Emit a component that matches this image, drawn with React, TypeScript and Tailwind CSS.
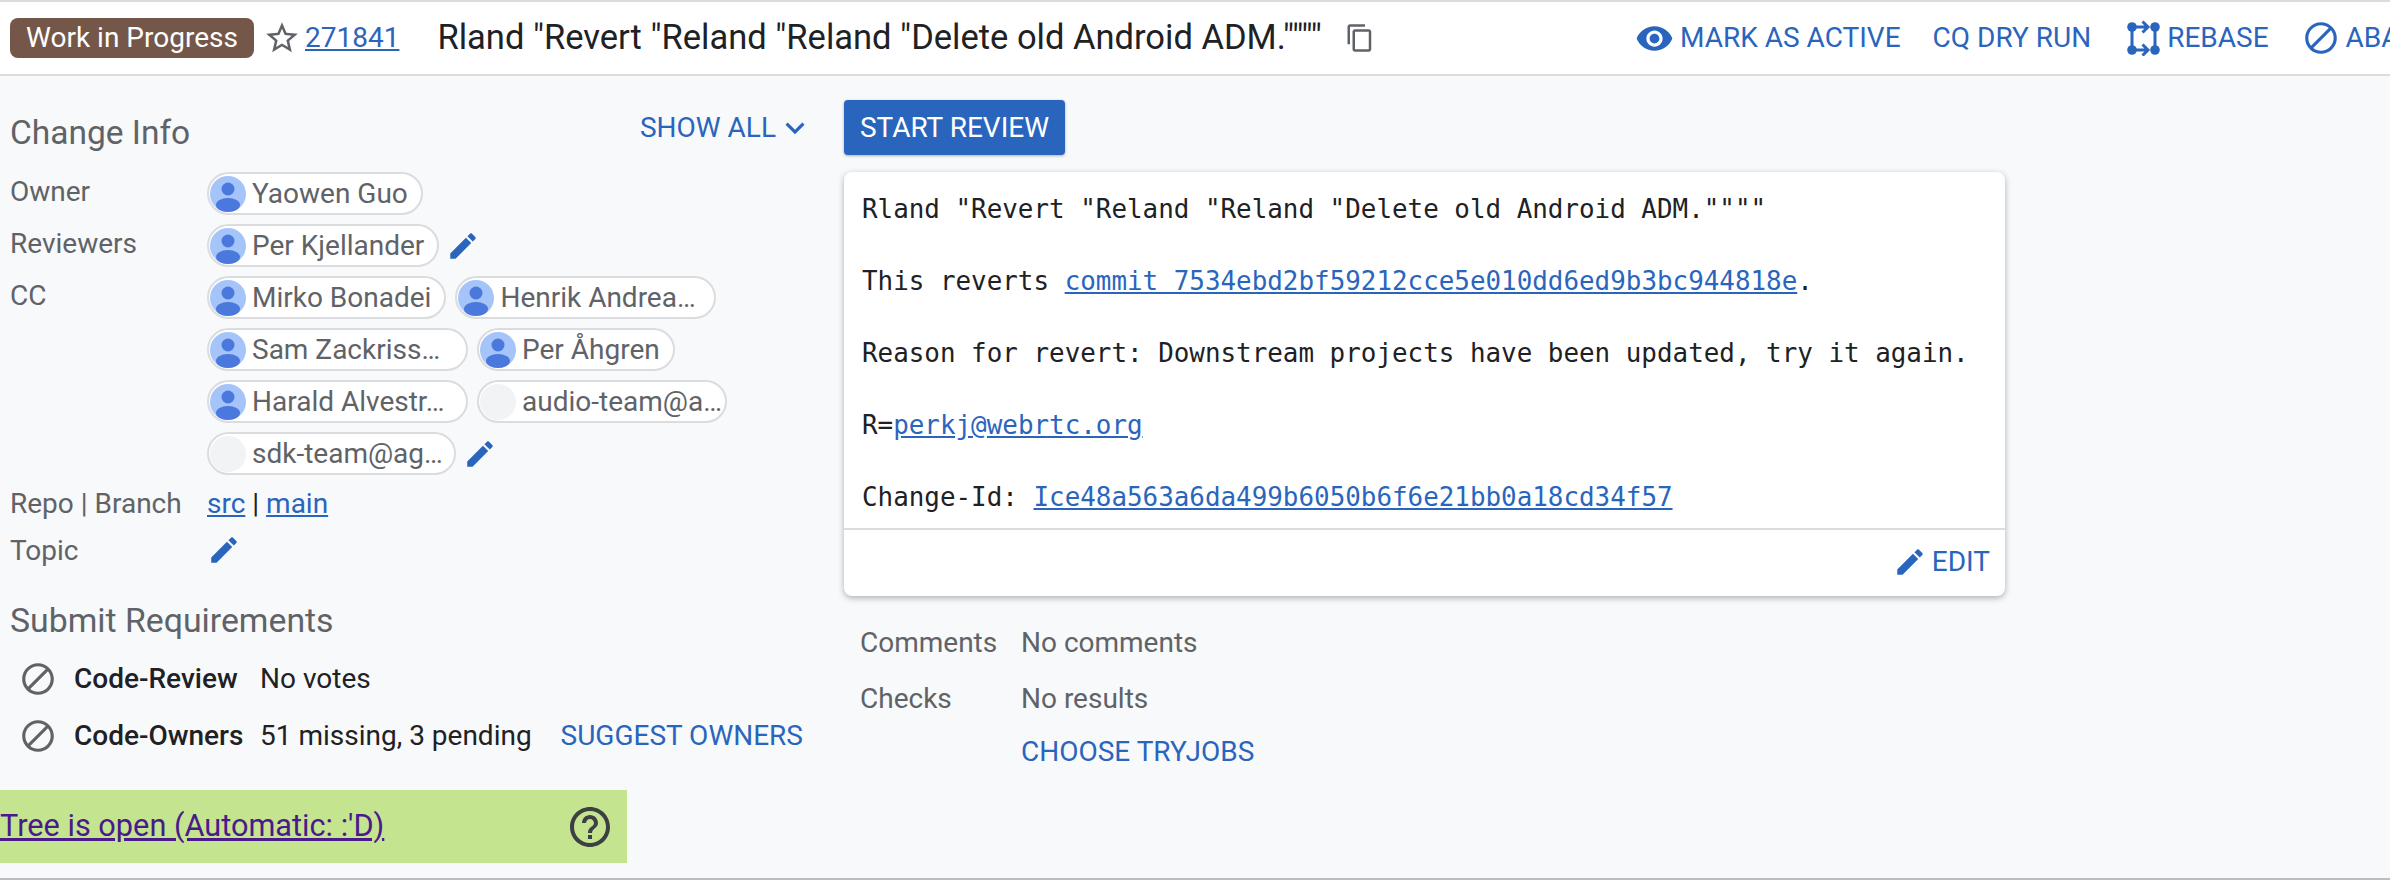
const FONT = "font-['Roboto',sans-serif]";

function Icon({ d, className }: { d: string; className: string }) {
  return (
    <svg viewBox="0 0 24 24" fill="currentColor" className={className} aria-hidden="true">
      <path d={d} />
    </svg>
  );
}

const EDIT =
  "M3 17.25V21h3.75L17.81 9.94l-3.75-3.75L3 17.25zM20.71 7.04c.39-.39.39-1.02 0-1.41l-2.34-2.34c-.39-.39-1.02-.39-1.41 0l-1.83 1.83 3.75 3.75 1.83-1.83z";
const BLOCK =
  "M12 2C6.48 2 2 6.48 2 12s4.48 10 10 10 10-4.48 10-10S17.52 2 12 2zM4 12c0-4.42 3.58-8 8-8 1.85 0 3.55.63 4.9 1.69L5.69 16.9C4.63 15.55 4 13.85 4 12zm8 8c-1.85 0-3.55-.63-4.9-1.69L18.31 7.1C19.37 8.45 20 10.15 20 12c0 4.42-3.58 8-8 8z";
const STAR =
  "M22 9.24l-7.19-.62L12 2 9.19 8.63 2 9.24l5.46 4.73L5.82 21 12 17.27 18.18 21l-1.63-7.03L22 9.24zM12 15.4l-3.76 2.27 1-4.28-3.32-2.88 4.38-.38L12 6.1l1.71 4.04 4.38.38-3.32 2.88 1 4.28L12 15.4z";
const EYE =
  "M12 4.5C7 4.5 2.73 7.61 1 12c1.73 4.39 6 7.5 11 7.5s9.27-3.11 11-7.5c-1.73-4.39-6-7.5-11-7.5zM12 17c-2.76 0-5-2.24-5-5s2.24-5 5-5 5 2.24 5 5-2.24 5-5 5zm0-8c-1.66 0-3 1.34-3 3s1.34 3 3 3 3-1.34 3-3-1.34-3-3-3z";
const COPY =
  "M16 1H4c-1.1 0-2 .9-2 2v14h2V3h12V1zm3 4H8c-1.1 0-2 .9-2 2v14c0 1.1.9 2 2 2h11c1.1 0 2-.9 2-2V7c0-1.1-.9-2-2-2zm0 16H8V7h11v14z";
const HELP =
  "M11 18h2v-2h-2v2zm1-16C6.48 2 2 6.48 2 12s4.48 10 10 10 10-4.48 10-10S17.52 2 12 2zm0 18c-4.41 0-8-3.59-8-8s3.59-8 8-8 8 3.59 8 8-3.59 8-8 8zm0-14c-2.21 0-4 1.79-4 4h2c0-1.1.9-2 2-2s2 .9 2 2c0 2-3 1.75-3 5h2c0-2.25 3-2.5 3-5 0-2.21-1.79-4-4-4z";
const CHEVRON = "M7.41 8.59 12 13.17l4.59-4.58L18 10l-6 6-6-6z";

function RebaseIcon() {
  return (
    <svg viewBox="0 0 34 36" fill="currentColor" className="w-[34px] h-[36px] shrink-0" aria-hidden="true">
      <circle cx="5" cy="7" r="4.8" />
      <circle cx="28" cy="7" r="4.8" />
      <circle cx="5" cy="30" r="4.8" />
      <circle cx="28" cy="30" r="4.8" />
      <path d="M5 7v23M28 7v23M5 7h16M15.5 1.5 21 7l-5.5 5.5M5 30h16M15.5 24.5 21 30l-5.5 5.5" fill="none" stroke="currentColor" strokeWidth="3" />
    </svg>
  );
}

function Avatar({ empty }: { empty?: boolean }) {
  if (empty) return <span className="w-[36px] h-[36px] rounded-full bg-[#f1f3f4] shrink-0" />;
  return (
    <svg viewBox="0 0 36 36" className="w-[36px] h-[36px] shrink-0" aria-hidden="true">
      <circle cx="18" cy="18" r="18" fill="#a5c4fa" />
      <circle cx="18" cy="13" r="6.5" fill="#4a78dc" />
      <ellipse cx="18" cy="29" rx="12" ry="7" fill="#4a78dc" />
    </svg>
  );
}

// width is only passed for the chips whose name got cut off
function Chip({ name, empty, width }: { name: string; empty?: boolean; width?: string }) {
  return (
    <span className={`inline-flex items-center h-[43px] border-2 border-[#dadce0] rounded-full bg-white pl-[1px] pr-[13px] gap-[6px] text-[28px] text-[#5f6368] whitespace-nowrap overflow-hidden ${width ?? ""}`}>
      <Avatar empty={empty} />
      {name}
    </span>
  );
}

function Pencil({ className }: { className?: string }) {
  return <Icon d={EDIT} className={`w-[34px] h-[34px] text-[#2a65bd] shrink-0 ${className ?? ""}`} />;
}

function MetaLabel({ children }: { children: React.ReactNode }) {
  return <div className="text-[28px] leading-[36px] pt-[2px] text-[#5f6368]">{children}</div>;
}

function Action({ children }: { children: React.ReactNode }) {
  return (
    <div className="flex items-center gap-[6px] text-[28px] text-[#2a65bd] whitespace-nowrap">{children}</div>
  );
}

export default function App() {
  return (
    <div className={`${FONT} w-[2390px] h-[880px] overflow-hidden bg-[#f8f9fa] flex flex-col border-b-2 border-[#bdbdbd]`}>
      <header className="h-[76px] shrink-0 bg-white border-y-2 border-[#dadce0] flex items-center pl-[10px] overflow-hidden">
        <div className="w-[1625px] shrink-0 flex items-center">
          <span className="h-[40px] w-[244px] shrink-0 rounded-[8px] bg-[#75574a] text-white text-[28px] flex items-center justify-center">
            Work in Progress
          </span>
          <Icon d={STAR} className="w-[38px] h-[38px] ml-[9px] text-[#5f6368] shrink-0" />
          <a className="ml-[4px] text-[28px] text-[#2a65bd] underline">271841</a>
          <span className="ml-[38px] text-[34.5px] text-[#202124] whitespace-nowrap">
            Rland "Revert "Reland "Reland "Delete old Android ADM.""""
          </span>
          <Icon d={COPY} className="w-[30px] h-[30px] ml-[23px] text-[#5f6368] shrink-0" />
        </div>
        <div className="flex items-center">
          <Action>
            <Icon d={EYE} className="w-[39px] h-[39px] shrink-0" />
            MARK AS ACTIVE
          </Action>
          <div className="ml-[32px]"><Action>CQ DRY RUN</Action></div>
          <div className="ml-[36px]">
            <Action>
              <RebaseIcon />
              REBASE
            </Action>
          </div>
          <div className="ml-[33px]">
            <Action>
              <Icon d={BLOCK} className="w-[38px] h-[38px] shrink-0" />
              ABANDON
            </Action>
          </div>
        </div>
      </header>

      <main className="flex flex-1">
        <section className="w-[844px] shrink-0 flex flex-col">
          <div className="flex justify-between items-start pl-[10px] pr-[30px] pt-[32px]">
            <h2 className="text-[33.5px] leading-[48px] pt-[1px] -mb-[1px] text-[#5f6368]">Change Info</h2>
            <div className="flex items-center text-[28px] text-[#2a65bd] leading-[40px]">
              SHOW ALL
              <Icon d={CHEVRON} className="w-[38px] h-[38px]" />
            </div>
          </div>
          <div className="grid grid-cols-[197px_1fr] pl-[10px] mt-[16px] gap-y-[9px]">
            <MetaLabel>Owner</MetaLabel>
            <div className="flex"><Chip name="Yaowen Guo" /></div>
            <MetaLabel>Reviewers</MetaLabel>
            <div className="flex items-center gap-[7px]">
              <Chip name="Per Kjellander" />
              <Pencil />
            </div>
            <MetaLabel>CC</MetaLabel>
            <div className="flex flex-col gap-[9px]">
              <div className="flex gap-[9px]">
                <Chip name="Mirko Bonadei" />
                <Chip name="Henrik Andrea…" width="w-[261px]" />
              </div>
              <div className="flex gap-[9px]">
                <Chip name="Sam Zackriss…" width="w-[261px]" />
                <Chip name="Per Åhgren" />
              </div>
              <div className="flex gap-[9px]">
                <Chip name="Harald Alvestr…" width="w-[261px]" />
                <Chip name="audio-team@a…" empty width="w-[250px]" />
              </div>
              <div className="flex items-center gap-[7px]">
                <Chip name="sdk-team@ag…" empty width="w-[249px]" />
                <Pencil />
              </div>
            </div>
            <MetaLabel>Repo | Branch</MetaLabel>
            <div className="text-[28px] leading-[36px] pt-[2px] text-[#202124]">
              <a className="text-[#2a65bd] underline">src</a> | <a className="text-[#2a65bd] underline">main</a>
            </div>
            <MetaLabel>Topic</MetaLabel>
            <div className="flex items-center"><Pencil /></div>
          </div>

          <h2 className="pl-[10px] mt-[30px] text-[33.8px] leading-[44px] text-[#5f6368]">Submit Requirements</h2>
          <div className="grid grid-cols-[55px_186px_auto_1fr] items-center gap-y-[19px] pl-[19px] pr-[41px] mt-[17px] text-[28px] leading-[36px] text-[#202124]">
            <Icon d={BLOCK} className="w-[38px] h-[38px] text-[#5f6368]" />
            <span className="font-medium">Code-Review</span>
            <span>No votes</span>
            <span />
            <Icon d={BLOCK} className="w-[38px] h-[38px] text-[#5f6368]" />
            <span className="font-medium whitespace-nowrap">Code-Owners</span>
            <span>51 missing, 3 pending</span>
            <span className="text-right text-[#2a65bd] whitespace-nowrap">SUGGEST OWNERS</span>
          </div>

          <div className="mt-[35px] w-[627px] h-[73px] bg-[#c5e48f] flex items-center justify-between pr-[13px]">
            <a className="text-[30.7px] text-[#4a1a8c] underline">Tree is open (Automatic: :'D)</a>
            <Icon d={HELP} className="w-[48px] h-[48px] text-[#3c4043]" />
          </div>
        </section>

        <section className="flex-1 pt-[24px]">
          <button className="h-[55px] w-[221px] rounded-[4px] bg-[#2a65bd] text-white text-[28px] shadow-[0_1px_3px_rgba(0,0,0,0.3)]">
            START REVIEW
          </button>
          <div className="mt-[17px] w-[1161px] h-[424px] rounded-[8px] bg-white shadow-[0_2px_6px_rgba(0,0,0,0.3)] flex flex-col">
            <pre className="flex-1 pl-[18px] pt-[19px] font-['DejaVu_Sans_Mono',monospace] text-[25.9px] leading-[36px] text-[#202124]">
{`Rland "Revert "Reland "Reland "Delete old Android ADM.""""

This reverts `}<a className="text-[#2a65bd] underline">commit 7534ebd2bf59212cce5e010dd6ed9b3bc944818e</a>{`.

Reason for revert: Downstream projects have been updated, try it again.

R=`}<a className="text-[#2a65bd] underline">perkj@webrtc.org</a>{`

Change-Id: `}<a className="text-[#2a65bd] underline">Ice48a563a6da499b6050b6f6e21bb0a18cd34f57</a>
            </pre>
            <div className="h-[68px] border-t-2 border-[#dadce0] flex items-center justify-end gap-[5px] pr-[15px] pb-[2px] text-[28px] text-[#2a65bd]">
              <Pencil />
              EDIT
            </div>
          </div>
          <div className="grid grid-cols-[161px_1fr] pl-[16px] mt-[29px] text-[28px] text-[#5f6368] leading-[36px] gap-y-[20px]">
            <span>Comments</span>
            <span>No comments</span>
            <span>Checks</span>
            <span>No results</span>
            <span />
            <span className="text-[#2a65bd] -mt-[3px]">CHOOSE TRYJOBS</span>
          </div>
        </section>
      </main>
    </div>
  );
}
